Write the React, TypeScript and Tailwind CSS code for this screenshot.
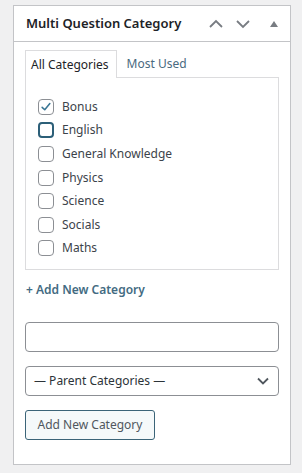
import React from "react";

const cats = ["Bonus", "English", "General Knowledge", "Physics", "Science", "Socials", "Maths"];

function Box({ checked, focused }: { checked?: boolean; focused?: boolean }) {
  return (
    <span
      className={
        "flex h-4 w-4 shrink-0 items-center justify-center rounded-[4px] bg-white " +
        (focused ? "border-2 border-[#2c5f78]" : "border border-[#8c8f94]")
      }
    >
      {checked && (
        <svg width="14" height="14" viewBox="0 0 20 20">
          <path d="M4.5 10.5 L8.2 14 L15.5 5" fill="none" stroke="#3a7694" strokeWidth="2.2" strokeLinecap="round" strokeLinejoin="round" />
        </svg>
      )}
    </span>
  );
}

export default function App() {
  return (
    <div
      className="h-[473px] w-[302px] bg-[#f0f0f1] pt-[5px] pl-[13px]"
      style={{ fontFamily: '"Segoe UI", "Noto Sans", sans-serif' }}
    >
      <div className="h-[460px] w-[278px] border border-[#c3c4c7] bg-white">
        <div className="flex h-[36px] items-center border-b border-[#c3c4c7] pl-[12px] pr-[12px]">
          <span className="text-[13px] font-semibold text-[#1d2327]">Multi Question Category</span>
          <div className="ml-auto flex items-center">
            <svg width="16" height="10" viewBox="0 0 16 10" className="mr-[11px]">
              <path d="M2 8 L8 2 L14 8" fill="none" stroke="#787c82" strokeWidth="1.8" />
            </svg>
            <svg width="16" height="10" viewBox="0 0 16 10" className="mr-[19px]">
              <path d="M2 2 L8 8 L14 2" fill="none" stroke="#787c82" strokeWidth="1.8" />
            </svg>
            <svg width="8" height="6" viewBox="0 0 8 6">
              <path d="M0 6 L4 0 L8 6 Z" fill="#787c82" />
            </svg>
          </div>
        </div>
        <div className="px-[11px] pt-[8px]">
          <div className="flex items-end text-[12px]">
            <div className="relative z-10 -mb-px h-[28px] border border-b-0 border-[#dcdcde] bg-white pl-[5px] pr-[7px] pt-[4px] leading-[19px] text-[#1d2327]">
              All Categories
            </div>
            <div className="h-[27px] pl-[10px] pt-[4px] leading-[19px] text-[#4a6a80]">Most Used</div>
          </div>
          <div className="h-[193px] border border-[#dcdcde] bg-white pl-[12px] pt-[17px]">
            {cats.map((c, i) => (
              <div key={c} className="flex h-[23.6px] items-center gap-[8px] text-[12px] text-[#3c434a]">
                <Box checked={i === 0} focused={i === 1} />
                <span>{c}</span>
              </div>
            ))}
          </div>
          <div className="mt-[11px] h-[18px] pl-px text-[12px] font-semibold leading-[18px] text-[#436b82]">+ Add New Category</div>
          <div className="mt-[23px] h-[30px] rounded-[4px] border border-[#8c8f94] bg-white" />
          <div className="mt-[14px] flex h-[30px] items-center rounded-[4px] border border-[#8c8f94] bg-white pl-[8px] pr-[8px] text-[12px] text-[#2c3338]">
            <span>— Parent Categories —</span>
            <svg width="14" height="10" viewBox="0 0 14 10" className="ml-auto">
              <path d="M2 2.5 L7 7.5 L12 2.5" fill="none" stroke="#50575e" strokeWidth="1.8" />
            </svg>
          </div>
          <button className="mt-[14px] h-[30px] w-[130px] rounded-[3px] border border-[#3b6478] bg-[#f5f9fa] text-[12px] text-[#50575e]">
            Add New Category
          </button>
        </div>
      </div>
    </div>
  );
}
